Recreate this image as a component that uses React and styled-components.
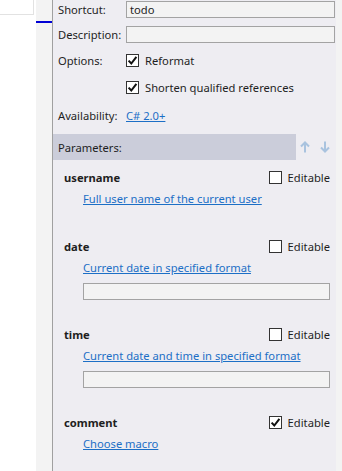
import React from 'react';
import styled, { createGlobalStyle } from 'styled-components';

const GlobalStyle = createGlobalStyle`
  html, body {
    margin: 0;
    padding: 0;
    background: #ffffff;
  }
  body {
    font-family: 'Noto Sans', 'Liberation Sans', sans-serif;
    font-size: 11.2px;
    color: #1e1e1e;
  }
`;

const Page = styled.div`
  display: flex;
  width: 342px;
  height: 471px;
  overflow: hidden;
`;

const LeftPane = styled.div`
  width: 36px;
  background: #ffffff;
`;

const TreeBox = styled.div`
  width: 34px;
  height: 15px;
  border-right: 1px solid #e2e2e2;
  border-bottom: 1px solid #e2e2e2;
  box-sizing: border-box;
`;

const TabStrip = styled.div`
  width: 16px;
  background: #f3f3f3;
  padding-top: 21px;
  box-sizing: border-box;
`;

const TabMark = styled.div`
  height: 2px;
  background: #0000d4;
`;

const Panel = styled.div`
  width: 283px;
  background: #eeedf2;
  border-left: 1px solid #a0a0a0;
  display: flex;
  flex-direction: column;
`;

const RightStrip = styled.div`
  flex: 1;
  background: #f3f3f3;
`;

const Form = styled.div`
  display: grid;
  grid-template-columns: 68px 1fr;
  grid-template-rows: 17px 17px 19px 19px 20px;
  row-gap: 8px;
  padding: 1px 1px 0 5px;
  align-items: center;
`;

const Label = styled.div`
  white-space: nowrap;
`;

const TextBox = styled.div`
  height: 17px;
  box-sizing: border-box;
  border: 1px solid #a3a3a3;
  background: #f3f3f3;
  padding: 0 3px;
  display: flex;
  align-items: center;
  margin-left: ${p => p.indent || 0}px;
  margin-right: ${p => p.inset || 0}px;
  margin-top: ${p => p.top || 0}px;
`;

const CheckRow = styled.label`
  display: flex;
  align-items: center;
  gap: 6px;
  white-space: nowrap;
`;

const Box = styled.span`
  width: 13px;
  height: 13px;
  box-sizing: border-box;
  border: 1px solid #333333;
  background: #ffffff;
  display: inline-flex;
  align-items: center;
  justify-content: center;
`;

const Link = styled.a`
  color: #1c6fc6;
  text-decoration: underline;
  white-space: nowrap;
`;

const HeaderRow = styled.div`
  display: flex;
  align-items: center;
  margin-top: 9px;
  height: 26px;
`;

const HeaderBar = styled.div`
  width: 243px;
  height: 26px;
  background: #cbcdda;
  display: flex;
  align-items: center;
  padding-left: 5px;
  box-sizing: border-box;
`;

const Arrows = styled.div`
  flex: 1;
  display: flex;
  justify-content: center;
  gap: 10px;
  padding-right: 2px;
`;

const ParamList = styled.div`
  padding-top: 7px;
  display: flex;
  flex-direction: column;
`;

const Param = styled.div`
  padding: 0 6px 0 11px;
  padding-bottom: ${p => (p.hasInput ? 24 : 27)}px;
`;

const NameRow = styled.div`
  height: 20px;
  display: flex;
  align-items: center;
  justify-content: space-between;
`;

const Name = styled.span`
  font-weight: 700;
`;

const LinkRow = styled.div`
  height: 22px;
  display: flex;
  align-items: center;
  padding-left: 19px;
`;

const Check = ({ on }) => (
  <Box>
    {on && (
      <svg width="11" height="11" viewBox="0 0 11 11">
        <path d="M1.6 5.6 L4.3 8.5 L9.4 1.8" fill="none" stroke="#111" strokeWidth="2" />
      </svg>
    )}
  </Box>
);

const Arrow = ({ down }) => (
  <svg width="10" height="12" viewBox="0 0 10 12" style={{ transform: down ? 'rotate(180deg)' : 'none' }}>
    <path d="M5 11.5 V1.5 M1 5.5 L5 1.5 L9 5.5" fill="none" stroke="#a9c3df" strokeWidth="2" />
  </svg>
);

const params = [
  { name: 'username', link: 'Full user name of the current user', input: false, editable: false },
  { name: 'date', link: 'Current date in specified format', input: true, editable: false },
  { name: 'time', link: 'Current date and time in specified format', input: true, editable: false },
  { name: 'comment', link: 'Choose macro', input: false, editable: true },
];

export default function App() {
  return (
    <Page>
      <GlobalStyle />
      <LeftPane>
        <TreeBox />
      </LeftPane>
      <TabStrip>
        <TabMark />
      </TabStrip>
      <Panel>
        <Form>
          <Label>Shortcut:</Label>
          <TextBox>todo</TextBox>
          <Label>Description:</Label>
          <TextBox />
          <Label>Options:</Label>
          <CheckRow><Check on />Reformat</CheckRow>
          <span />
          <CheckRow><Check on />Shorten qualified references</CheckRow>
          <Label>Availability:</Label>
          <div><Link>C# 2.0+</Link></div>
        </Form>
        <HeaderRow>
          <HeaderBar>Parameters:</HeaderBar>
          <Arrows>
            <Arrow />
            <Arrow down />
          </Arrows>
        </HeaderRow>
        <ParamList>
          {params.map(p => (
            <Param key={p.name} hasInput={p.input}>
              <NameRow>
                <Name>{p.name}</Name>
                <CheckRow><Check on={p.editable} />Editable</CheckRow>
              </NameRow>
              <LinkRow><Link>{p.link}</Link></LinkRow>
              {p.input && <TextBox indent={19} top={5} />}
            </Param>
          ))}
        </ParamList>
      </Panel>
      <RightStrip />
    </Page>
  );
}
